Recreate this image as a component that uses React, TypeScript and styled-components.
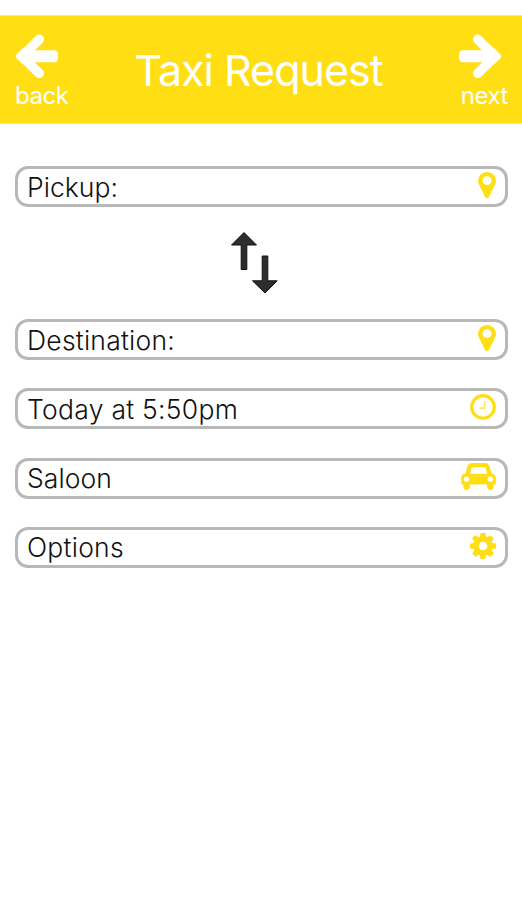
import React from "react";
import styled, { createGlobalStyle } from "styled-components";

const GlobalStyle = createGlobalStyle`
  * { box-sizing: border-box; }
  body { margin: 0; background: #fff; font-family: Inter, "Liberation Sans", sans-serif; }
`;

const Screen = styled.main`
  height: 900px;
  padding-top: 15px;
  background: #fff;
`;

const Header = styled.header`
  display: flex;
  justify-content: space-between;
  height: 109px;
  padding: 18px 14px 0 15px;
  background: #ffde14;
  border-top: 1px solid #ffeb80;
  border-bottom: 1px solid #ffeb80;
  color: #fff;
`;

const NavButton = styled.button<{ $end?: boolean }>`
  display: flex;
  flex-direction: column;
  align-items: ${(p) => (p.$end ? "flex-end" : "flex-start")};
  width: 60px;
  padding: 0;
  border: 0;
  background: none;
  color: inherit;
  font: 400 24px/32px Inter, sans-serif;
`;

const ArrowIcon = styled.svg<{ $flip?: boolean }>`
  width: 44px;
  height: 46px;
  margin: ${(p) => (p.$flip ? "0 6px 0 0" : "0")};
  transform: ${(p) => (p.$flip ? "scaleX(-1)" : "none")};
`;

const NavLabel = styled.span`
  letter-spacing: -0.45px;
  white-space: nowrap;
`;

const Title = styled.h1`
  margin: 10px 6px 0 0;
  font-size: 43px;
  font-weight: 400;
  line-height: 52px;
  letter-spacing: -1px;
  white-space: nowrap;
`;

const Form = styled.form`
  display: flex;
  flex-direction: column;
  padding: 42px 14px 0 15px;
`;

const Stack = styled.div`
  display: flex;
  flex-direction: column;
  gap: 28.3px;
`;

const FieldBox = styled.div`
  display: flex;
  align-items: center;
  justify-content: space-between;
  height: 41px;
  padding: 0 9px;
  border: 3px solid #b8b8b8;
  border-radius: 13px;
  color: #111;
`;

const FieldText = styled.span<{ $spacing: number }>`
  padding-top: 1px;
  font-size: 26.5px;
  font-weight: 330;
  line-height: 33px;
  letter-spacing: ${(p) => p.$spacing}px;
  white-space: nowrap;
`;

const FieldIcon = styled.svg<{ $w: number; $h: number }>`
  width: ${(p) => p.$w}px;
  height: ${(p) => p.$h}px;
  margin-top: -3px;
  fill: #ffde14;
`;

const SwapButton = styled.button`
  display: flex;
  justify-content: center;
  height: 112px;
  padding: 24px 16px 0 0;
  border: 0;
  background: none;
`;

function Arrow({ flip }: { flip?: boolean }) {
  return (
    <ArrowIcon $flip={flip} viewBox="0 0 44 46" fill="#fff">
      <path d="M24.2 5.3L7 22.3L24.2 39.3" fill="none" stroke="#fff" strokeWidth="9.6" strokeLinecap="round" strokeLinejoin="round" />
      <path d="M1.6 20.4L8 14V30.6L1.6 24.2Q0.2 22.3 1.6 20.4Z" />
      <rect x="10" y="16.3" width="33" height="12" rx="4" />
    </ArrowIcon>
  );
}

function Pin() {
  return (
    <FieldIcon $w={18} $h={26} viewBox="384 128 1024 1536" preserveAspectRatio="none">
      <path d="M1152 640q0-106-75-181t-181-75-181 75-75 181 75 181 181 75 181-75 75-181zm256 0q0 109-33 179l-364 774q-16 33-47.5 52t-67.5 19-67.5-19-46.5-52l-365-774q-33-70-33-179 0-212 150-362t362-150 362 150 150 362z" />
    </FieldIcon>
  );
}

function Clock() {
  return (
    <FieldIcon $w={26} $h={26} viewBox="0 0 26 26">
      <circle cx="13" cy="13" r="11.3" fill="none" stroke="#ffde14" strokeWidth="3.2" />
      <path d="M14.6 7.2V14.2H9" fill="none" stroke="#ffde14" strokeWidth="1.8" opacity="0.65" />
    </FieldIcon>
  );
}

function Car() {
  return (
    <FieldIcon $w={35} $h={27} viewBox="0 128 2048 1600">
      <path d="M480 1088q0-66-47-113t-113-47-113 47-47 113 47 113 113 47 113-47 47-113zm36-320h1016l-89-357q-2-8-14-17.5t-21-9.5h-768q-9 0-21 9.5t-14 17.5zm1372 320q0-66-47-113t-113-47-113 47-47 113 47 113 113 47 113-47 47-113zm160-96v384q0 14-9 23t-23 9h-96v128q0 80-56 136t-136 56-136-56-56-136v-128h-1024v128q0 80-56 136t-136 56-136-56-56-136v-128h-96q-14 0-23-9t-9-23v-384q0-93 65.5-158.5t158.5-65.5h28l105-419q23-94 104-157.5t179-63.5h768q98 0 179 63.5t104 157.5l105 419h28q93 0 158.5 65.5t65.5 158.5z" />
    </FieldIcon>
  );
}

function Cog() {
  return (
    <FieldIcon $w={26} $h={26} viewBox="128 128 1536 1536">
      <path d="M1152 896q0-106-75-181t-181-75-181 75-75 181 75 181 181 75 181-75 75-181zm512-109v222q0 12-8 23t-20 13l-185 28q-19 54-39 91 35 50 107 138 10 12 10 25t-9 23q-27 37-99 108t-94 71q-12 0-26-9l-138-108q-44 23-91 38-16 136-29 186-7 28-36 28h-222q-14 0-24.5-8.5t-11.5-21.5l-28-184q-49-16-90-37l-141 107q-10 9-25 9-14 0-25-11-126-114-165-168-7-10-7-23 0-12 8-23 15-21 51-66.5t54-70.5q-27-50-41-99l-183-27q-13-2-21-12.5t-8-23.5v-222q0-12 8-23t19-13l186-28q14-46 39-92-40-57-107-138-10-12-10-24 0-10 9-23 26-36 98.5-107.5t94.5-71.5q13 0 26 10l138 107q44-23 91-38 16-136 29-186 7-28 36-28h222q14 0 24.5 8.5t11.5 21.5l28 184q49 16 90 37l142-107q9-9 24-9 13 0 25 10 129 119 165 170 7 8 7 22 0 12-8 23-15 21-51 66.5t-54 70.5q26 50 41 98l183 28q13 2 21 12.5t8 23.5z" />
    </FieldIcon>
  );
}

function Field({ label, spacing, icon }: { label: string; spacing: number; icon: React.ReactNode }) {
  return (
    <FieldBox>
      <FieldText $spacing={spacing}>{label}</FieldText>
      {icon}
    </FieldBox>
  );
}

export default function App() {
  return (
    <>
      <GlobalStyle />
      <Screen>
        <Header>
          <NavButton>
            <Arrow />
            <NavLabel>back</NavLabel>
          </NavButton>
          <Title>Taxi Request</Title>
          <NavButton $end>
            <Arrow flip />
            <NavLabel>next</NavLabel>
          </NavButton>
        </Header>
        <Form>
          <Field label="Pickup:" spacing={0.05} icon={<Pin />} />
          <SwapButton type="button" aria-label="Swap pickup and destination">
            <svg width="48" height="64" viewBox="0 0 48 64" fill="#2d2d2d" stroke="#111" strokeWidth="1">
              <path d="M14 1.5L26.5 14H16.8V38.5H11.2V14H1.5Z" />
              <path d="M35 62L47.2 49.8H37.8V25H32.2V49.8H22.5Z" />
            </svg>
          </SwapButton>
          <Stack>
            <Field label="Destination:" spacing={0.23} icon={<Pin />} />
            <Field label="Today at 5:50pm" spacing={0.27} icon={<Clock />} />
            <Field label="Saloon" spacing={0.08} icon={<Car />} />
            <Field label="Options" spacing={0.25} icon={<Cog />} />
          </Stack>
        </Form>
      </Screen>
    </>
  );
}
